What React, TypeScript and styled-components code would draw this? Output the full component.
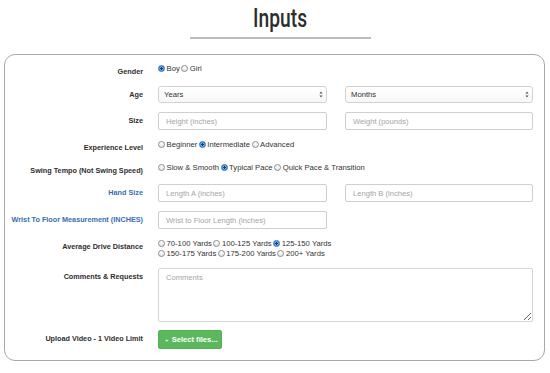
import React from "react";
import styled, { createGlobalStyle } from "styled-components";

const GlobalStyle = createGlobalStyle`
  html, body { margin: 0; padding: 0; background: #fff; }
  body { font-family: "Liberation Sans", Arial, sans-serif; color: #333; }
  * { box-sizing: border-box; }
`;

const Page = styled.div`
  width: 550px;
  height: 373px;
  overflow: hidden;
`;

const Header = styled.header`
  height: 54px;
  padding: 4px 0 0 10px;
  display: flex;
  flex-direction: column;
  align-items: center;
`;

const Title = styled.h1`
  margin: 0;
  font-family: Roboto, "Liberation Sans", sans-serif;
  font-weight: 500;
  font-size: 25px;
  line-height: 30px;
  color: #2d2d2d;
  transform: scaleX(0.77);
`;

const Rule = styled.div`
  width: 181px;
  height: 2px;
  margin-top: 3px;
  background: #bdbdbd;
`;

const Card = styled.section`
  margin: 0 5px 0 4px;
  border: 1px solid #a9a9a9;
  border-radius: 11px;
  padding: 8px 11px 11px 0;
`;

const Row = styled.div<{ $space?: number }>`
  display: grid;
  grid-template-columns: 138px 1fr;
  column-gap: 15px;
  align-items: start;
  margin-bottom: ${(p) => p.$space ?? 9}px;
  &:last-child {
    margin-bottom: 0;
  }
`;

const Label = styled.label<{ $accent?: boolean }>`
  text-align: right;
  font-weight: 700;
  font-size: 7.25px;
  line-height: 10px;
  padding-top: 4px;
  white-space: nowrap;
  color: ${(p) => (p.$accent ? "#3a6db0" : "#2e2e2e")};
`;

const RadioStack = styled.div`
  display: flex;
  flex-direction: column;
`;

const RadioLine = styled.div`
  display: flex;
  align-items: center;
  height: 10.5px;
  font-size: 7.7px;
  color: #333;
  white-space: nowrap;
`;

const Option = styled.span`
  display: inline-flex;
  align-items: center;
  gap: 1.5px;
  margin-right: 1.5px;
`;

const Dot = styled.span<{ $checked?: boolean }>`
  width: 7px;
  height: 7px;
  border-radius: 50%;
  flex: none;
  border: 0.8px solid ${(p) => (p.$checked ? "#2f6fc2" : "#8c8c8c")};
  background: ${(p) =>
    p.$checked
      ? "radial-gradient(circle, #1a3762 0 1px, #7fb2ee 1.4px, #3f87dc 2.6px)"
      : "linear-gradient(#ffffff, #e6e6e6)"};
`;

const Pair = styled.div`
  display: grid;
  grid-template-columns: 169px 1fr;
  column-gap: 18px;
`;

const Field = styled.input`
  display: block;
  width: 100%;
  height: 18px;
  border: 1px solid #cfcfcf;
  border-radius: 2px;
  padding: 0 7px;
  font-family: "Liberation Sans", Arial, sans-serif;
  font-size: 7.6px;
  color: #555;
  outline: none;
  &::placeholder {
    color: #a5a5a5;
  }
`;

const SelectWrap = styled.div`
  position: relative;
  height: 17px;
`;

const Select = styled.select`
  display: block;
  appearance: none;
  width: 100%;
  height: 17px;
  border: 1px solid #d2d2d2;
  border-radius: 3px;
  padding: 0 5px 1px;
  background: linear-gradient(#ffffff, #f7f7f7);
  font-family: "Liberation Sans", Arial, sans-serif;
  font-size: 7.7px;
  color: #333;
  outline: none;
`;

const Arrows = styled.svg`
  position: absolute;
  right: 4px;
  top: 5px;
  pointer-events: none;
`;

const Comments = styled.textarea`
  display: block;
  width: 100%;
  height: 54px;
  border: 1px solid #d5d5d5;
  border-radius: 2px;
  padding: 4px 7px;
  font-family: "Liberation Sans", Arial, sans-serif;
  font-size: 7.6px;
  resize: vertical;
  outline: none;
  &::placeholder {
    color: #a5a5a5;
  }
`;

const UploadButton = styled.button`
  display: block;
  width: 64px;
  height: 19px;
  padding: 0 0 0 6px;
  text-align: left;
  background: #5cb85c;
  border: 1px solid #55b155;
  border-radius: 2px;
  color: #fff;
  font-family: "Liberation Sans", Arial, sans-serif;
  font-weight: 700;
  font-size: 7.6px;
  white-space: nowrap;
`;

const Plus = styled.span`
  font-weight: 400;
  font-size: 6px;
  margin-right: 1px;
`;

type Choice = { text: string; checked?: boolean };

const Radios = ({ lines }: { lines: Choice[][] }) => (
  <RadioStack>
    {lines.map((line, i) => (
      <RadioLine key={i}>
        {line.map((c) => (
          <Option key={c.text}>
            <Dot $checked={c.checked} />
            {c.text}
          </Option>
        ))}
      </RadioLine>
    ))}
  </RadioStack>
);

const SelectBox = ({ value }: { value: string }) => (
  <SelectWrap>
    <Select defaultValue={value}>
      <option>{value}</option>
    </Select>
    <Arrows width="4" height="7" viewBox="0 0 4 7">
      <path d="M0.4 2.6 L2 0.8 L3.6 2.6 Z M0.4 4.4 L2 6.2 L3.6 4.4 Z" fill="#444" />
    </Arrows>
  </SelectWrap>
);

const App = (): JSX.Element => {
  return (
    <Page>
      <GlobalStyle />
      <Header>
        <Title>Inputs</Title>
        <Rule />
      </Header>
      <Card>
        <Row>
          <Label>Gender</Label>
          <Radios lines={[[{ text: "Boy", checked: true }, { text: "Girl" }]]} />
        </Row>
        <Row>
          <Label>Age</Label>
          <Pair>
            <SelectBox value="Years" />
            <SelectBox value="Months" />
          </Pair>
        </Row>
        <Row>
          <Label>Size</Label>
          <Pair>
            <Field placeholder="Height (inches)" />
            <Field placeholder="Weight (pounds)" />
          </Pair>
        </Row>
        <Row>
          <Label>Experience Level</Label>
          <Radios
            lines={[
              [{ text: "Beginner" }, { text: "Intermediate", checked: true }, { text: "Advanced" }],
            ]}
          />
        </Row>
        <Row $space={8}>
          <Label>Swing Tempo (Not Swing Speed)</Label>
          <Radios
            lines={[
              [
                { text: "Slow & Smooth" },
                { text: "Typical Pace", checked: true },
                { text: "Quick Pace & Transition" },
              ],
            ]}
          />
        </Row>
        <Row>
          <Label $accent>Hand Size</Label>
          <Pair>
            <Field placeholder="Length A (inches)" />
            <Field placeholder="Length B (inches)" />
          </Pair>
        </Row>
        <Row>
          <Label $accent>Wrist To Floor Measurement (INCHES)</Label>
          <Pair>
            <Field placeholder="Wrist to Floor Length (inches)" />
          </Pair>
        </Row>
        <Row>
          <Label>Average Drive Distance</Label>
          <Radios
            lines={[
              [{ text: "70-100 Yards" }, { text: "100-125 Yards" }, { text: "125-150 Yards", checked: true }],
              [{ text: "150-175 Yards" }, { text: "175-200 Yards" }, { text: "200+ Yards" }],
            ]}
          />
        </Row>
        <Row $space={8}>
          <Label>Comments &amp; Requests</Label>
          <Comments placeholder="Comments" />
        </Row>
        <Row>
          <Label>Upload Video - 1 Video Limit</Label>
          <div>
            <UploadButton>
              <Plus>+</Plus> Select files...
            </UploadButton>
          </div>
        </Row>
      </Card>
    </Page>
  );
};

export default App;
